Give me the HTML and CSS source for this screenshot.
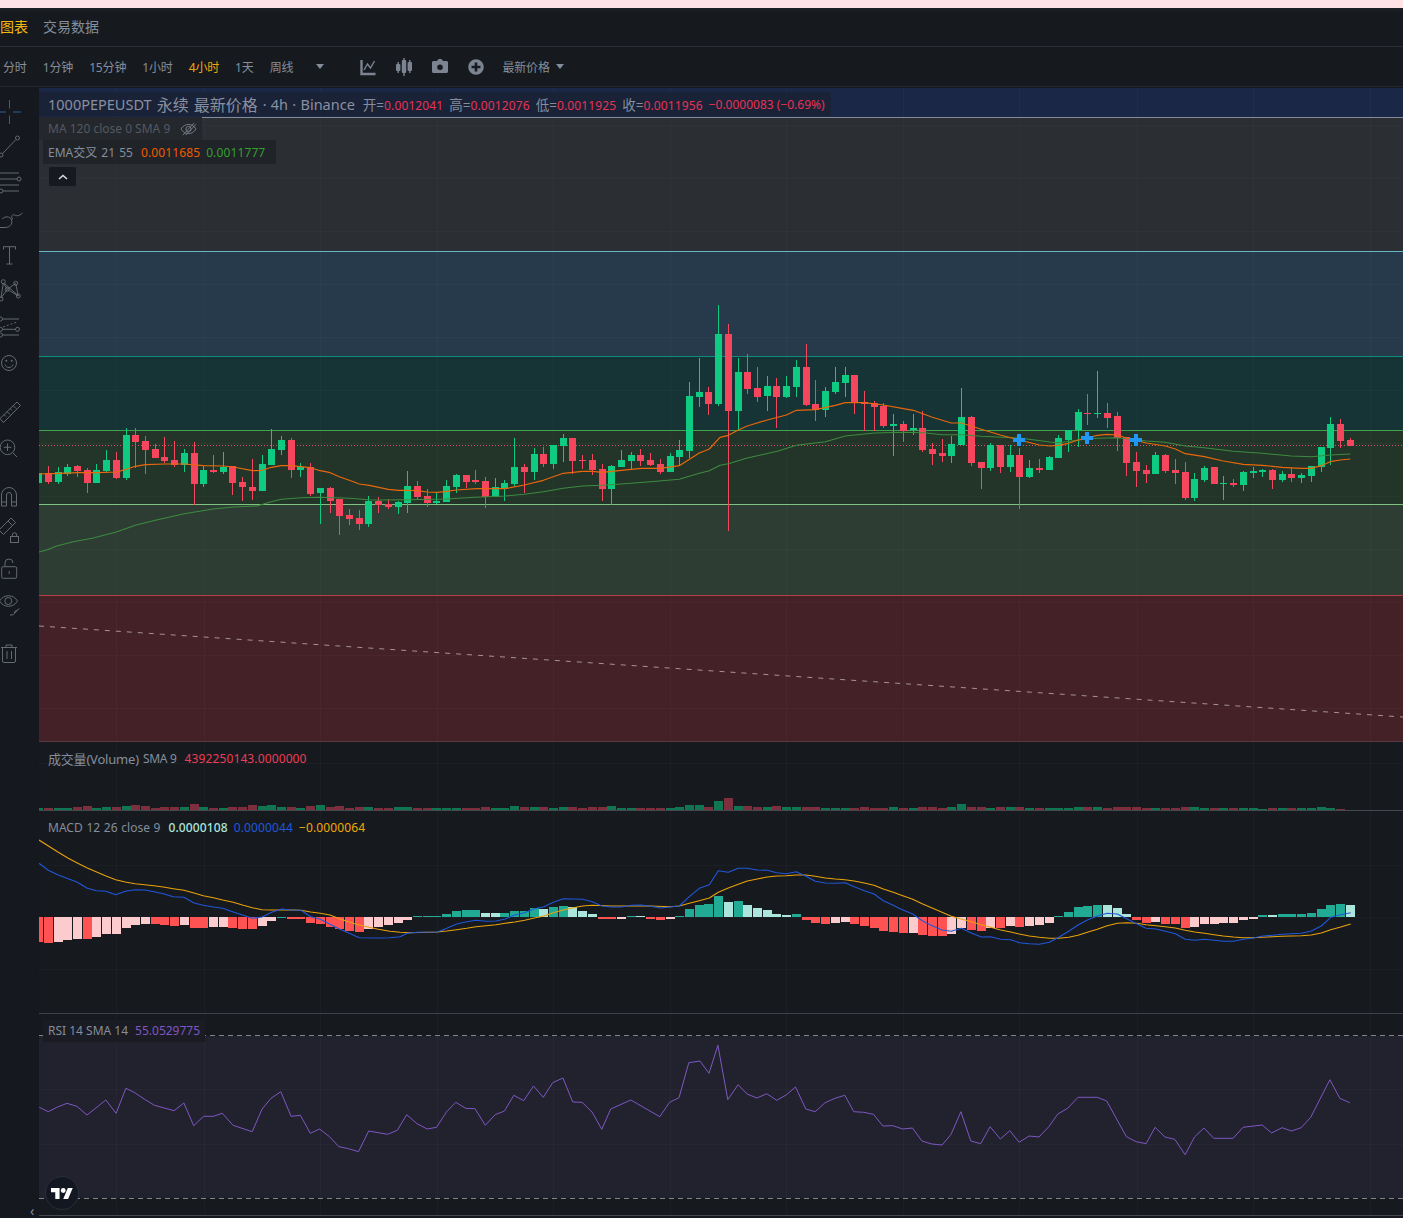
FILE: index.html
```html
<!DOCTYPE html>
<html lang="zh-CN">
<head>
<meta charset="utf-8">
<title>1000PEPEUSDT 永续</title>
<link rel="stylesheet" href="styles.css">
</head>
<body>
<div class="stripe"></div>
<nav class="tabs">
  <span class="tab tab-active">图表</span>
  <span class="tab">交易数据</span>
</nav>
<div class="toolbar">
  <span class="tf">分时</span>
  <span class="tf">1分钟</span>
  <span class="tf">15分钟</span>
  <span class="tf">1小时</span>
  <span class="tf tf-active">4小时</span>
  <span class="tf">1天</span>
  <span class="tf">周线</span>
  <span class="caret caret-more"></span>
  <div class="tb-icons">
    <svg class="tb-icon" viewBox="0 0 20 20"><path d="M3.500 3v14h14" class="tb-s"/><path d="M6 13l3.500-6 3 4 4-7" class="tb-t"/></svg>
    <svg class="tb-icon" viewBox="0 0 20 20"><rect x="2" y="7" width="4.400" height="7" rx="1"/><rect x="7.800" y="3" width="4.400" height="13" rx="1"/><rect x="13.600" y="5" width="4.400" height="9" rx="1"/><path d="M4.200 5v11M10 1v18M15.800 3v13" class="tb-t"/></svg>
    <svg class="tb-icon" viewBox="0 0 20 20"><path fill-rule="evenodd" d="M7 4l1.500-2h3L13 4h3.500c.8 0 1.500.7 1.500 1.500v9c0 .8-.7 1.500-1.500 1.500h-13C2.700 16 2 15.300 2 14.500v-9C2 4.700 2.700 4 3.500 4H7zm3 9a2.800 2.800 0 1 0 0-5.600 2.800 2.800 0 0 0 0 5.600z"/></svg>
    <svg class="tb-icon" viewBox="0 0 20 20"><path fill-rule="evenodd" d="M10 2.200a7.800 7.800 0 1 1 0 15.600 7.800 7.800 0 0 1 0-15.600zM8.700 5.500v3.200H5.500v2.600h3.200v3.200h2.600v-3.200h3.200V8.700h-3.200V5.500H8.700z"/></svg>
  </div>
  <span class="tf tf-price">最新价格</span>
  <span class="caret"></span>
</div>
<div class="workspace">
  <aside class="tools">
    <svg class="tool" viewBox="0 0 39 36"><path class="tool-blue" d="M0 18h6M13 18h8M9.500 6v8.500M9.500 21.500V30"/></svg>
    <svg class="tool" viewBox="0 0 39 36"><path d="M2.500 23.500L16 9.500"/><circle cx="17.500" cy="8" r="2"/><circle cx="1" cy="25" r="2"/></svg>
    <svg class="tool" viewBox="0 0 39 36"><path d="M0 7h19M0 13h17M0 19h19M3 25h16"/><circle cx="19" cy="13" r="2"/><circle cx="1" cy="25" r="2"/></svg>
    <svg class="tool" viewBox="0 0 39 36"><path d="M0 25.500h5c4.500 0 8-3 6.500-7.500-1.500-4-6.500-4-9.500-1"/><path d="M12.500 17.500c-2-3.500 0-5.500 2-4.500 2.500 1 4 1.500 8-2"/></svg>
    <svg class="tool" viewBox="0 0 39 36"><path d="M3.500 11.500V8.700h12v2.800M9.500 8.700V26M6.500 26h6"/></svg>
    <svg class="tool" viewBox="0 0 39 36"><path d="M1 24l2.300-15 4 6.300 8.400-6 2.600 12.700-11-6.700L1 24zM4.500 9.500l13.500 12"/><circle cx="1" cy="25" r="2"/><circle cx="3.300" cy="7.700" r="2"/><circle cx="7.300" cy="15.300" r="2"/><circle cx="15.700" cy="9.300" r="2"/><circle cx="18.300" cy="22" r="2"/></svg>
    <svg class="tool" viewBox="0 0 39 36"><path d="M2.500 9h16.500M2.500 19.300H15.500M2.500 25H19"/><path class="tool-dash" d="M3 17l14-5"/><circle cx=".5" cy="9" r="2"/><circle cx=".5" cy="19.300" r="2"/><circle cx="17.500" cy="19.300" r="2"/><circle cx=".5" cy="25" r="2"/></svg>
    <svg class="tool" viewBox="0 0 39 36"><circle cx="9" cy="17" r="7.500"/><circle class="tool-fill" cx="6.300" cy="14.700" r="1"/><circle class="tool-fill" cx="11.700" cy="14.700" r="1"/><path d="M5 18.500c1 4 7 4 8 0"/></svg>
    <svg class="tool tool-sep" viewBox="0 0 39 36"><path d="M0 24.500L17 8l3.500 3.500L3.500 28.500 0 24.500zM4 20.500l2 2M7 17.500l3 3M10 14.500l2 2M13 11.500l3 3"/></svg>
    <svg class="tool" viewBox="0 0 39 36"><circle cx="7.500" cy="17.300" r="7.300"/><path d="M13 23l4 4M7.500 13.500v7.500M3.800 17.300h7.500"/></svg>
    <svg class="tool tool-sep" viewBox="0 0 39 36"><path d="M1.500 28V17a7.500 7.500 0 0 1 15 0v11H11.500V17a2.500 2.500 0 0 0-5 0v11H1.500zM1.500 24h5M11.500 24h5"/></svg>
    <svg class="tool" viewBox="0 0 39 36"><path d="M-1 16L11 4l4.500 4.500L3.500 20.500-1 16zM8 7l4.500 4.500"/><rect x="10.500" y="22.500" width="8" height="6"/><path d="M12.300 22.500v-1.500a2.200 2.200 0 0 1 4.400 0v1.500"/></svg>
    <svg class="tool tool-near" viewBox="0 0 39 36"><rect x="1.700" y="14.700" width="15" height="11.600" rx="1.500"/><path d="M5 14.700V11a4 4 0 0 1 8 0M9.200 19v3"/></svg>
    <svg class="tool" viewBox="0 0 39 36"><path d="M-.5 13c4-7 14-7 18 0-4 7-14 7-18 0z"/><circle cx="8.300" cy="13" r="3.500"/><path d="M10 27c3 .5 5-1 5-3s2-1.500 2-1.500-1 2.500-3 2M15.500 23.500l4-3"/></svg>
    <svg class="tool tool-sep" viewBox="0 0 39 36"><path d="M1 11.500h16M6 11.500V9h6v2.500M2.500 11.500V25a1.500 1.500 0 0 0 1.500 1.500h10a1.500 1.500 0 0 0 1.500-1.500V11.500M7 15v8M11.500 15v8"/></svg>
  </aside>
  <div class="chart">
    <section class="pane pane-main">
      <svg id="svg-main" class="plot"></svg>
      <div class="legend">
        <div class="legend-row legend-title">
          <span class="ticker">1000PEPEUSDT</span>
          <span class="ticker ticker-cjk">永续</span>
          <span class="ticker ticker-cjk">最新价格</span>
          <span class="ticker ticker-sep">· 4h · Binance</span>
          <span class="ohlc"><i>开=</i>0.0012041</span>
          <span class="ohlc"><i>高=</i>0.0012076</span>
          <span class="ohlc"><i>低=</i>0.0011925</span>
          <span class="ohlc"><i>收=</i>0.0011956</span>
          <span class="ohlc ohlc-change">−0.0000083 (−0.69%)</span>
        </div>
        <div class="legend-row legend-ma">
          <span>MA 120 close 0 SMA 9</span>
          <svg class="eye-off" viewBox="0 0 18 14"><path d="M1 7c4-6.500 12-6.500 16 0-4 6.500-12 6.500-16 0z"/><circle cx="9" cy="7" r="2.800"/><path d="M3 13.500L15 .5M6 13.500L17 2"/></svg>
        </div>
        <div class="legend-row legend-ema">
          <span class="ema-label">EMA交叉 21 55</span>
          <span class="val val-orange">0.0011685</span>
          <span class="val val-green">0.0011777</span>
        </div>
        <button class="collapse" type="button"><svg viewBox="0 0 10 6"><path d="M1 5l4-3.500L9 5"/></svg></button>
      </div>
    </section>
    <section class="pane pane-vol">
      <svg id="svg-vol" class="plot"></svg>
      <div class="legend-sub">
        <span class="sub-cjk">成交量(Volume)</span>
        <span class="sub-sma">SMA 9</span>
        <span class="val val-red">4392250143.0000000</span>
      </div>
    </section>
    <section class="pane pane-macd">
      <svg id="svg-macd" class="plot"></svg>
      <div class="legend-sub">
        <span class="macd-label">MACD 12 26 close 9</span>
        <span class="val val-mint">0.0000108</span>
        <span class="val val-blue">0.0000044</span>
        <span class="val val-amber">−0.0000064</span>
      </div>
    </section>
    <section class="pane pane-rsi">
      <svg id="svg-rsi" class="plot"></svg>
      <div class="legend-sub legend-rsi">
        <span>RSI 14 SMA 14</span>
        <span class="val-purple">55.0529775</span>
      </div>
      <div class="tv-logo"><svg viewBox="0 0 36 18"><path d="M14 18H7V7H0V0h14v18zM28 18h-8L27.500 0h8L28 18z"/><circle cx="20" cy="4" r="4"/></svg></div>
    </section>
  </div>
</div>
<span class="collapse-left">‹</span>
<script src="chart.js"></script>
</body>
</html>
```

FILE: styles.css
```css
* { box-sizing: border-box; }
html, body { margin: 0; padding: 0; }
body {
  width: 1403px;
  height: 1218px;
  overflow: hidden;
  position: relative;
  background: #15181e;
  color: #848e9c;
  font-family: "Noto Sans", "Noto Sans CJK SC", sans-serif;
  font-size: 12px;
}
.stripe { height: 8px; background: #ffe3e7; }
.tabs {
  height: 39px;
  display: flex;
  align-items: center;
  gap: 15px;
  padding-bottom: 2px;
  border-bottom: 1px solid #2a2e35;
  background: linear-gradient(#1d2126 0, #161a1f 5px);
}
.tab { font-size: 14px; color: #848e9c; }
.tab-active { color: #f0b90b; }
.toolbar {
  height: 40px;
  display: flex;
  align-items: center;
  gap: 16px;
  padding-left: 3px;
  background: #161a1f;
  border-bottom: 1px solid #23272d;
}
.tf { color: #848e9c; line-height: 16px; margin-top: 2px; letter-spacing: -.15px; }
.tf-active { color: #f0a70a; }
.caret {
  width: 0;
  height: 0;
  border-left: 4.500px solid transparent;
  border-right: 4.500px solid transparent;
  border-top: 5px solid #848e9c;
}
.toolbar .caret { margin-left: -10px; }
.toolbar .caret-more { margin-left: 7px; }
.tb-icons { display: flex; gap: 16px; margin-left: 18px; }
.tb-icon { width: 20px; height: 20px; fill: #7c8491; display: block; }
.tb-s { fill: none; stroke: #7c8491; stroke-width: 2.400; }
.tb-t { fill: none; stroke: #7c8491; stroke-width: 1.400; }
.workspace { display: flex; height: 1131px; padding-top: 1px; }
.tools {
  width: 39px;
  flex: none;
  display: flex;
  flex-direction: column;
  padding-top: 6px;
  background: #15181e;
}
.tool {
  width: 39px;
  height: 36px;
  flex: none;
  fill: none;
  stroke: #646972;
  stroke-width: 1;
  overflow: hidden;
}
.tool-sep { margin-top: 12px; }
.tool-near { margin-top: 2px; }
.tool-blue { stroke: #2a6098; }
.tool-dash { stroke-dasharray: 2 2; }
.tool-fill { fill: #646972; stroke: none; }
.chart { flex: 1; min-width: 0; display: flex; flex-direction: column; }
.pane { position: relative; background: #161a1f; }
.pane-main { height: 654px; }
.pane-vol { height: 69px; }
.pane-macd { height: 203px; }
.pane-rsi { height: 202px; }
.plot { position: absolute; left: 0; top: 0; width: 100%; height: 100%; display: block; }
.legend {
  position: absolute;
  left: 0;
  top: 4px;
  display: flex;
  flex-direction: column;
  align-items: flex-start;
}
.legend-row { display: flex; align-items: center; }
.legend-title {
  height: 24px;
  margin-bottom: 1px;
  padding: 0 6px 0 9px;
  background: #1a2238;
}
.ticker { font-size: 14.500px; color: #8890a0; margin-right: 5px; }
.ticker-cjk { font-size: 16px; }
.ticker-sep { margin-right: 8px; word-spacing: .5px; }
.ohlc { color: #e63353; margin-right: 6px; letter-spacing: .12px; }
.ohlc i { font-style: normal; color: #848e9c; font-size: 13.500px; letter-spacing: 0; }
.ohlc-change { margin-right: 0; letter-spacing: 0; }
.legend-ma {
  height: 23px;
  padding: 0 5px 0 9px;
  background: #24272c;
  color: #545962;
  gap: 10px;
}
.eye-off { width: 17px; height: 14px; fill: none; stroke: #7a808a; stroke-width: 1; }
.legend-ema {
  height: 24px;
  margin-left: 4px;
  padding: 0 11px 0 5px;
  gap: 6px;
  background: #202328;
  color: #848e9c;
}
.ema-label { word-spacing: 1px; margin-right: 2px; }
.val { letter-spacing: .12px; }
.val-orange { color: #f05a00; }
.val-green { color: #33a02c; }
.collapse {
  margin: 2px 0 0 9px;
  width: 29px;
  height: 21px;
  padding: 0;
  display: flex;
  align-items: center;
  justify-content: center;
  background: #161a1f;
  border: 1px solid #2a2e35;
  border-radius: 3px;
}
.collapse svg { width: 10px; height: 6px; fill: none; stroke: #d8dade; stroke-width: 1.600; }
.legend-sub {
  position: absolute;
  left: 9px;
  top: 8px;
  display: flex;
  align-items: center;
  gap: 8px;
  line-height: 18px;
}
.sub-cjk { font-size: 13px; margin-right: -4px; letter-spacing: -.2px; }
.sub-sma { letter-spacing: -.3px; }
.macd-label { word-spacing: .6px; }
.val-red { color: #ef3b55; }
.val-mint { color: #ace5dc; font-weight: 500; }
.val-blue { color: #2157d9; margin-left: -2px; }
.val-amber { color: #f0a70a; margin-left: -2px; }
.val-purple { color: #7e57c2; }
.legend-rsi {
  top: 6px;
  left: 4px;
  padding: 0 5px;
  height: 22px;
  background: #1a1b23;
  gap: 7px;
}
.tv-logo {
  position: absolute;
  left: 6px;
  top: 162px;
  width: 34px;
  height: 34px;
  border-radius: 50%;
  background: #131722;
  border: 1px solid #2a2e39;
  display: flex;
  align-items: center;
  justify-content: center;
}
.tv-logo svg { width: 22px; height: 11px; fill: #fff; }
.collapse-left { position: absolute; left: 30px; top: 1201px; color: #848e9c; font-size: 14px; }
```

FILE: chart.js
```js
const NS = 'http://www.w3.org/2000/svg';
const el = (parent, tag, attrs) => {
  const n = document.createElementNS(NS, tag);
  for (const k in attrs) n.setAttribute(k, attrs[k]);
  parent.appendChild(n);
  return n;
};
const GRID_X = [116, 204, 320, 437, 553, 670, 786, 903, 1019, 1137, 1253, 1370];
const cx = i => 48.3 + 9.716 * i;
const L = 39, W = 1364;

const setup = (id, top, h) => {
  const s = document.getElementById(id);
  s.setAttribute('viewBox', `${L} ${top} ${W} ${h}`);
  return s;
};
const rect = (s, x, y, w, h, fill) => el(s, 'rect', { x, y, width: w, height: h, fill, 'shape-rendering': 'crispEdges' });
const hline = (s, y, color, extra = {}) => el(s, 'line', { x1: L, x2: L + W, y1: y + 0.5, y2: y + 0.5, stroke: color, 'stroke-width': 1, ...extra });
const grid = (s, top, h, ys) => {
  GRID_X.forEach(x => rect(s, x, top, 1, h, 'rgba(255,255,255,0.022)'));
  ys.forEach(y => rect(s, L, y, W, 1, 'rgba(255,255,255,0.022)'));
};
// Readings taken at 3x: [x, y] pairs with an origin per crop; later crops only add points beyond the last x.
const poly = (segs, sx = 3) => {
  const out = [];
  let last = -1e9;
  segs.forEach(([bx, by, arr, scale]) => {
    const k = scale || sx;
    for (let i = 0; i < arr.length; i += 2) {
      const x = bx + arr[i] / k, y = by + arr[i + 1] / 3;
      if (x > last + 0.5) { out.push(`${x.toFixed(1)},${y.toFixed(1)}`); last = x; }
    }
  });
  return out.join(' ');
};
const line = (s, pts, color, w = 1) => el(s, 'polyline', { points: pts, fill: 'none', stroke: color, 'stroke-width': w, 'stroke-linejoin': 'round' });

/* candles: colour, wick top, body top, body bottom, wick bottom */
const C = [];
const add = (by, rows) => rows.forEach(r => C.push([r[0], by + r[1] / 3, by + r[2] / 3, by + r[3] / 3, by + r[4] / 3]));
add(420, [
['g',159,159,189,189],['r',138,159,186,192],['g',141,156,186,192],['g',132,141,162,168],['r',135,138,153,171],['r',144,150,189,219],['g',132,150,189,189],['g',90,120,153,159],['r',96,120,174,177],['g',24,45,174,180],['r',24,45,66,144],['r',48,63,90,162],['r',72,87,114,114],['r',51,111,123,129],['r',63,120,135,141],['g',87,99,135,156],['r',66,99,192,255],['g',138,150,192,201],['r',105,150,156,159],['g',96,141,156,162],['r',138,138,189,225],['r',171,186,201,243],['r',117,201,213,240],['g',105,132,213,213],['g',27,87,135,135],['g',48,60,90,105],['r',54,60,150,174],['g',129,141,150,171],['r',129,141,222,228],['g',204,204,219,312],['r',201,204,243,279],['r',237,237,288,345],['r',267,285,297,315],['r',270,294,312,330],['g',228,243,312,321],['r',231,243,255,279]]);
add(300, [
['r',597,612,621,627],['g',603,606,621,642],['g',513,558,609,639],['r',543,558,591,597],['r',567,588,609,621],['g',576,603,609,612],['g',540,558,606,606],['g',522,525,561,579],['r',525,525,546,564],['r',510,540,546,552],['r',531,543,591,624],['g',534,561,591,591],['g',540,549,564,603],['g',414,501,552,558],['r',492,501,516,579],['g',444,462,516,540],['r',441,462,492,501],['g',435,435,492,507],['g',402,414,438,486],['r',414,414,483,522],['r',465,480,483,507],['r',462,480,510,525],['r',492,507,567,603],['g',495,498,567,615],['g',450,480,501,501],['g',456,465,483,507],['r',447,465,483,498],['r',459,480,495,498],['r',477,492,516,522],['g',459,468,516,516],['g',420,450,471,498],['g',246,288,453,474],['g',174,276,291,321],['r',261,276,312,345],['g',15,102,312,318],
['r',72,102,333,693],['g',174,216,333,390],['r',162,216,267,282],['r',201,264,291,306],['g',228,258,288,333],['r',234,258,291,384],['g',228,258,291,294],['g',180,201,261,291],['r',132,201,315,318],['r',240,312,330,363],['g',261,273,330,351],['g',201,246,276,282],['g',201,225,249,291],['r',225,225,309,342],['r',273,306,312,393],['r',303,309,321,393],['r',309,318,378,384],['g',342,372,378,468],['r',363,372,393,426],['g',342,384,390,405],['r',333,384,450,456],['r',429,447,462,495],['r',417,459,468,486],['g',408,432,468,489],['g',264,351,435,435],['r',348,351,489,498],['r',486,486,504,567],['g',429,435,504,513],['r',435,435,501,519],['g',435,465,501,516],['r',444,465,531,627],['g',480,504,531,534],['r',477,504,510,519],['g',468,471,510,510]]);
add(360, [
['g',225,234,294,294],['g',210,210,240,276],['g',147,156,210,261],['r',102,159,162,195],['g',33,159,162,174],['r',129,159,174,204],['r',156,168,234,273],['r',231,231,309,348],['r',276,306,333,381],['r',315,330,342,369],['g',276,285,342,342],['r',282,285,333,339],['r',297,330,339,372],['r',306,336,414,420],['g',339,357,414,423],['g',318,324,360,366],['r',321,321,372,372],['g',348,369,372,420],['r',357,369,375,381],['g',333,336,375,393],['g',321,333,339,354],['g',327,330,336,351],['r',327,330,360,387],['g',333,342,360,366],['r',324,342,354,366],['g',339,345,354,369],['g',318,318,348,366],['g',261,261,321,336],['g',171,192,264,315],['r',177,192,243,264],['r',234,240,258,258]]);
const GREEN = '#0ecb81', RED = '#f6465d';

/* main pane */
const m = setup('svg-main', 88, 654);
[[88, 29, '#1a2747'], [118, 133, '#2b2e33'], [252, 104, '#263a4c'], [357, 73, '#163335'], [431, 73, '#233428'], [505, 90, '#2e3d34'], [596, 145, '#442126']]
  .forEach(([y, h, f]) => rect(m, L, y, W, h, f));
grid(m, 88, 653, [125, 178, 231, 284, 337, 390, 443, 496, 549, 602, 655, 708]);
[[117, '#858b96'], [251, '#66b6c4'], [356, '#0e8c7c'], [430, '#3fa34d'], [504, '#7cc47f'], [595, '#b5404a'], [741, '#59373f']]
  .forEach(([y, c]) => rect(m, L, y, W, 1, c));
el(m, 'line', { x1: L, y1: 626, x2: L + W, y2: 717, stroke: '#a69294', 'stroke-dasharray': '5 6', 'stroke-width': 1 });
hline(m, 445, '#d85568', { 'stroke-dasharray': '1 2' });
C.forEach((c, idx) => {
  const i = idx - 1, x = cx(i), col = c[0] === 'g' ? GREEN : RED;
  rect(m, Math.round(x - 0.5), c[1], 1, c[4] - c[1], col);
  rect(m, Math.round(x - 3.5), c[2], 7, Math.max(1, c[3] - c[2]), col);
});
line(m, poly([
  [40, 420, [-3,396, 20,390, 50,378, 100,365, 160,354, 229,336, 286,316, 346,301, 433,281, 520,267, 580,261, 650,258, 694,245, 724,238, 784,233, 841,232, 928,235, 988,239, 1020,240]],
  [380, 300, [0,600, 82,599, 199,597, 286,592, 376,588, 433,583, 490,575, 550,565, 607,558, 667,556, 724,552, 811,545, 898,538, 958,520, 988,512, 1020,496]],
  [700, 300, [0,518, 25,512, 55,497, 85,491, 142,474, 232,454, 289,436, 376,425, 436,408, 523,399, 610,397, 670,398, 727,404, 784,404, 844,409, 958,414, 1050,426]],
  [1040, 360, [0,245, 55,248, 115,240, 172,235, 232,233, 319,243, 376,247, 436,258, 493,263, 580,274, 667,280, 754,288, 814,290, 871,285, 931,282]]
]), '#3d8b40', 1.1);
line(m, poly([
  [40, 420, [-3,162, 60,160, 112,158, 172,158, 229,156, 259,148, 286,139, 316,134, 376,132, 433,132, 490,137, 550,138, 580,141, 637,152, 667,151, 694,142, 724,137, 754,137, 811,143, 841,152, 871,158, 898,170, 928,181, 958,192, 988,196, 1020,203]],
  [380, 300, [0,563, 25,568, 55,571, 82,571, 112,572, 142,576, 172,577, 199,574, 229,570, 289,566, 376,566, 433,555, 490,541, 550,520, 607,514, 637,514, 667,517, 724,511, 784,505, 841,505, 898,497, 958,459, 988,447, 1020,412]],
  [700, 300, [0,458, 25,447, 55,414, 85,406, 115,390, 142,378, 202,360, 259,345, 289,331, 346,329, 406,316, 436,308, 493,308, 550,315, 610,326, 640,331, 697,352, 754,369, 784,369, 844,388, 901,405, 958,420, 1018,435, 1050,438]],
  [1040, 360, [0,257, 25,258, 55,256, 85,250, 115,240, 172,226, 202,223, 232,225, 259,234, 319,249, 376,258, 406,267, 436,281, 493,290, 550,303, 610,313, 667,316, 727,322, 784,325, 814,325, 844,317, 871,305, 901,300, 931,297]]
]), '#e8680c', 1.2);
[[1019, 440], [1087, 438], [1136, 440]].forEach(([x, y]) => {
  rect(m, x - 6, y - 2, 12, 4, '#2196f3');
  rect(m, x - 2, y - 6, 4, 12, '#2196f3');
});

/* volume pane */
const v = setup('svg-vol', 742, 69);
grid(v, 742, 68, [763]);
const VOL = [2,2,2,2,3,4,2,3,3,4,5,4,2,3,3,3,6,3,2,2,3,3,5,4,5,3,3,2,4,5,3,4,2,3,3,2,2,3,
  3,2,2,2,2,2,2,2,3,2,2,4,3,3,3,2,3,3,2,3,3,4,2,2,2,2,2,2,3,5,5,3,9,12,4,4,3,3,4,3,3,3,3,2,2,2,2,3,2,2,3,
  2,2,3,3,2,3,6,3,3,2,3,3,3,2,2,2,2,2,3,3,3,2,3,3,3,2,2,2,2,3,3,2,2,2,2,2,2,1,2,2,2,2,2,3,2,1];
VOL.forEach((h, idx) => {
  const c = C[idx];
  if (!c) return;
  rect(v, Math.round(cx(idx - 1) - 4.5), 810 - h, 9, h, c[0] === 'g' ? '#0f7651' : '#7e2f3e');
});
rect(v, L, 810, W, 1, '#44484f');

/* MACD pane */
const d = setup('svg-macd', 811, 203);
grid(d, 811, 202, [865, 917, 969]);
const COL = { R: '#ff5252', P: '#fccbcd', G: '#22ab94', L: '#ace5dc' };
const HIST = 'R25 R26 P25 P23 P22 R22 P20 P17 P17 P11 P8 P7 R7 R8 R9 P8 R11 R11 P10 P10 R11 R12 R12 P9 P4 G1 R2 R2 R6 R7 R10 R12 R14 R15 P12 P10 P8 P6 P3 ' +
  'g1 g1 g1 g3 g6 g7 g7 l4 l4 g4 g6 g6 g9 l8 g10 g11 l10 l6 l3 R2 R2 P2 g1 l1 R2 R3 P2 g1 g8 g12 g13 g21 l15 g16 l12 l9 l7 l3 l2 g3 R3 R6 R7 P6 P5 R7 R9 R11 R14 R15 ' +
  'R16 P16 R18 R19 R19 P17 P11 R13 R14 P11 R11 P9 R10 P9 P8 P6 g1 g5 g10 g11 g12 l12 l9 l3 R3 R6 P5 R7 R7 R11 P10 P7 P7 P6 P6 P3 P2 g2 l2 g3 g3 g3 g4 g8 g12 g13 l12';
HIST.split(' ').forEach((t, idx) => {
  const k = t[0], h = +t.slice(1), x = Math.round(cx(idx - 1) - 4.5);
  if (k === 'R' || k === 'P') rect(d, x, 917, 9, h, COL[k]);
  else if (k === 'G') rect(d, x, 917, 9, h, COL.G);
  else rect(d, x, 917 - h, 9, h, k === 'g' ? COL.G : COL.L);
});
line(d, poly([
  [0, 740, [117,300, 175,337, 205,355, 232,369, 262,384, 290,396, 318,408, 347,419, 376,426, 405,431, 434,434, 462,437, 490,441, 520,446, 552,451, 582,459, 610,467, 640,473, 668,480, 700,487, 730,496, 757,503, 786,509, 815,510, 845,510, 873,510, 903,511, 932,516, 961,520, 990,525, 1018,536, 1048,546, 1078,555, 1107,562, 1135,568, 1170,574, 1200,577]],
  [400, 780, [0,456, 30,458, 112,456, 140,453, 170,449, 200,445, 228,440, 258,437, 288,434, 316,430, 344,426, 374,421, 403,414, 432,408, 460,398, 490,390, 520,383, 548,378, 577,376, 634,378, 694,378, 752,378, 810,380, 838,378, 868,370, 898,362, 928,354, 955,337, 985,324, 1015,313, 1042,303, 1072,297, 1102,291, 1130,288, 1159,287, 1189,285, 1218,285, 1246,289, 1276,294, 1306,297, 1335,299, 1363,303, 1393,309, 1422,316, 1450,327, 1480,337, 1500,344]],
  [900, 780, [38,358, 68,372, 98,385, 126,397, 154,409, 184,417, 214,425, 244,434, 272,442, 302,450, 332,456, 358,462, 388,468, 418,472, 448,475, 476,475, 506,472, 534,466, 562,457, 592,448, 622,437, 652,430, 680,428, 710,430, 738,434, 768,437, 796,440, 826,444, 856,451, 884,456, 914,460, 942,464, 970,468, 1000,471, 1030,473, 1060,473, 1088,472, 1118,470, 1146,469, 1174,468, 1204,467, 1234,465, 1264,459, 1292,449, 1322,441, 1352,432]]
]), '#e9a20c', 1.1);
line(d, poly([
  [0, 740, [117,370, 145,391, 175,405, 205,416, 232,427, 262,445, 290,452, 318,454, 347,464, 376,454, 405,449, 434,450, 462,455, 490,461, 520,470, 552,472, 582,489, 610,496, 640,501, 668,505, 700,516, 730,526, 757,535, 786,531, 815,517, 845,507, 873,510, 903,511, 932,530, 961,538, 990,553, 1018,567, 1048,580, 1078,593, 1135,594, 1170,593, 1200,590]],
  [400, 780, [0,468, 22,460, 52,457, 112,456, 140,445, 170,432, 200,425, 228,421, 258,424, 288,423, 316,417, 344,405, 374,398, 403,386, 432,380, 460,367, 490,356, 520,357, 548,358, 577,365, 606,378, 634,381, 664,381, 694,376, 724,375, 752,379, 782,384, 838,378, 868,350, 898,325, 928,314, 955,272, 985,277, 1015,265, 1042,265, 1072,270, 1102,271, 1130,278, 1159,281, 1189,275, 1218,289, 1246,304, 1276,309, 1306,310, 1335,308, 1363,320, 1393,332, 1422,342, 1450,362, 1480,376, 1500,386]],
  [900, 780, [38,402, 68,423, 98,438, 126,450, 154,454, 184,445, 214,459, 244,471, 272,470, 302,478, 332,479, 358,488, 388,491, 418,493, 448,487, 476,472, 506,454, 534,435, 562,420, 592,408, 622,400, 652,402, 680,416, 710,431, 738,445, 768,447, 796,454, 826,461, 856,478, 884,481, 914,478, 942,481, 970,484, 1000,484, 1030,478, 1060,474, 1088,468, 1118,466, 1146,463, 1174,461, 1204,460, 1234,453, 1264,438, 1292,412, 1322,404, 1352,398]]
]), '#2157d9', 1.1);
rect(d, L, 1013, W, 1, '#3f4349');

/* RSI pane */
const r = setup('svg-rsi', 1014, 202);
rect(r, L, 1036, W, 162, '#22222f');
grid(r, 1014, 201, [1089, 1144]);
hline(r, 1035, '#7f838a', { 'stroke-dasharray': '5 4' });
hline(r, 1198, '#7f838a', { 'stroke-dasharray': '5 4' });
line(r, poly([
  [0, 1010, [88,292, 108,305, 129,291, 150,280, 172,289, 195,315, 237,270, 260,310, 282,235, 302,248, 324,268, 346,286, 390,302, 412,279, 434,347, 456,319, 478,319, 498,310, 522,346, 565,365, 587,297, 607,265, 629,245, 652,319, 673,316, 695,370, 716,357, 738,380, 759,410, 781,416, 803,425, 826,363, 868,373, 890,361, 911,314, 934,341, 957,357, 978,352, 1000,306, 1021,277, 1043,295, 1064,296, 1087,346, 1109,314, 1130,303, 1151,256, 1173,272, 1195,228, 1217,262, 1238,218, 1261,204, 1283,276, 1304,277, 1326,306, 1348,358, 1368,297, 1413,270, 1478,320, 1500,277, 1521,263, 1543,158, 1568,153], 2.24],
  [700, 1010, [0,156, 20,190, 40,106, 62,269, 85,224, 105,252, 127,264, 149,251, 171,271, 192,255, 213,231, 236,297, 257,305, 279,278, 301,265, 323,256, 343,305, 365,307, 387,313, 408,348, 430,347, 452,357, 474,354, 495,393, 517,402, 540,405, 560,373, 582,305, 604,393, 626,401, 647,350, 670,387, 691,362, 712,397, 734,378, 756,381, 778,350, 798,312, 820,295, 843,262, 886,262, 907,273, 951,380, 973,395, 995,401, 1015,352, 1037,381, 1059,388, 1082,434, 1103,381, 1124,354, 1146,385, 1189,385, 1211,352, 1254,345, 1275,369, 1298,353, 1319,363, 1341,353, 1362,322, 1405,209, 1427,265, 1449,278], 2.2304]
]), '#7e57c2', 1);
rect(r, L, 1215, W, 1, '#44484f');
```
